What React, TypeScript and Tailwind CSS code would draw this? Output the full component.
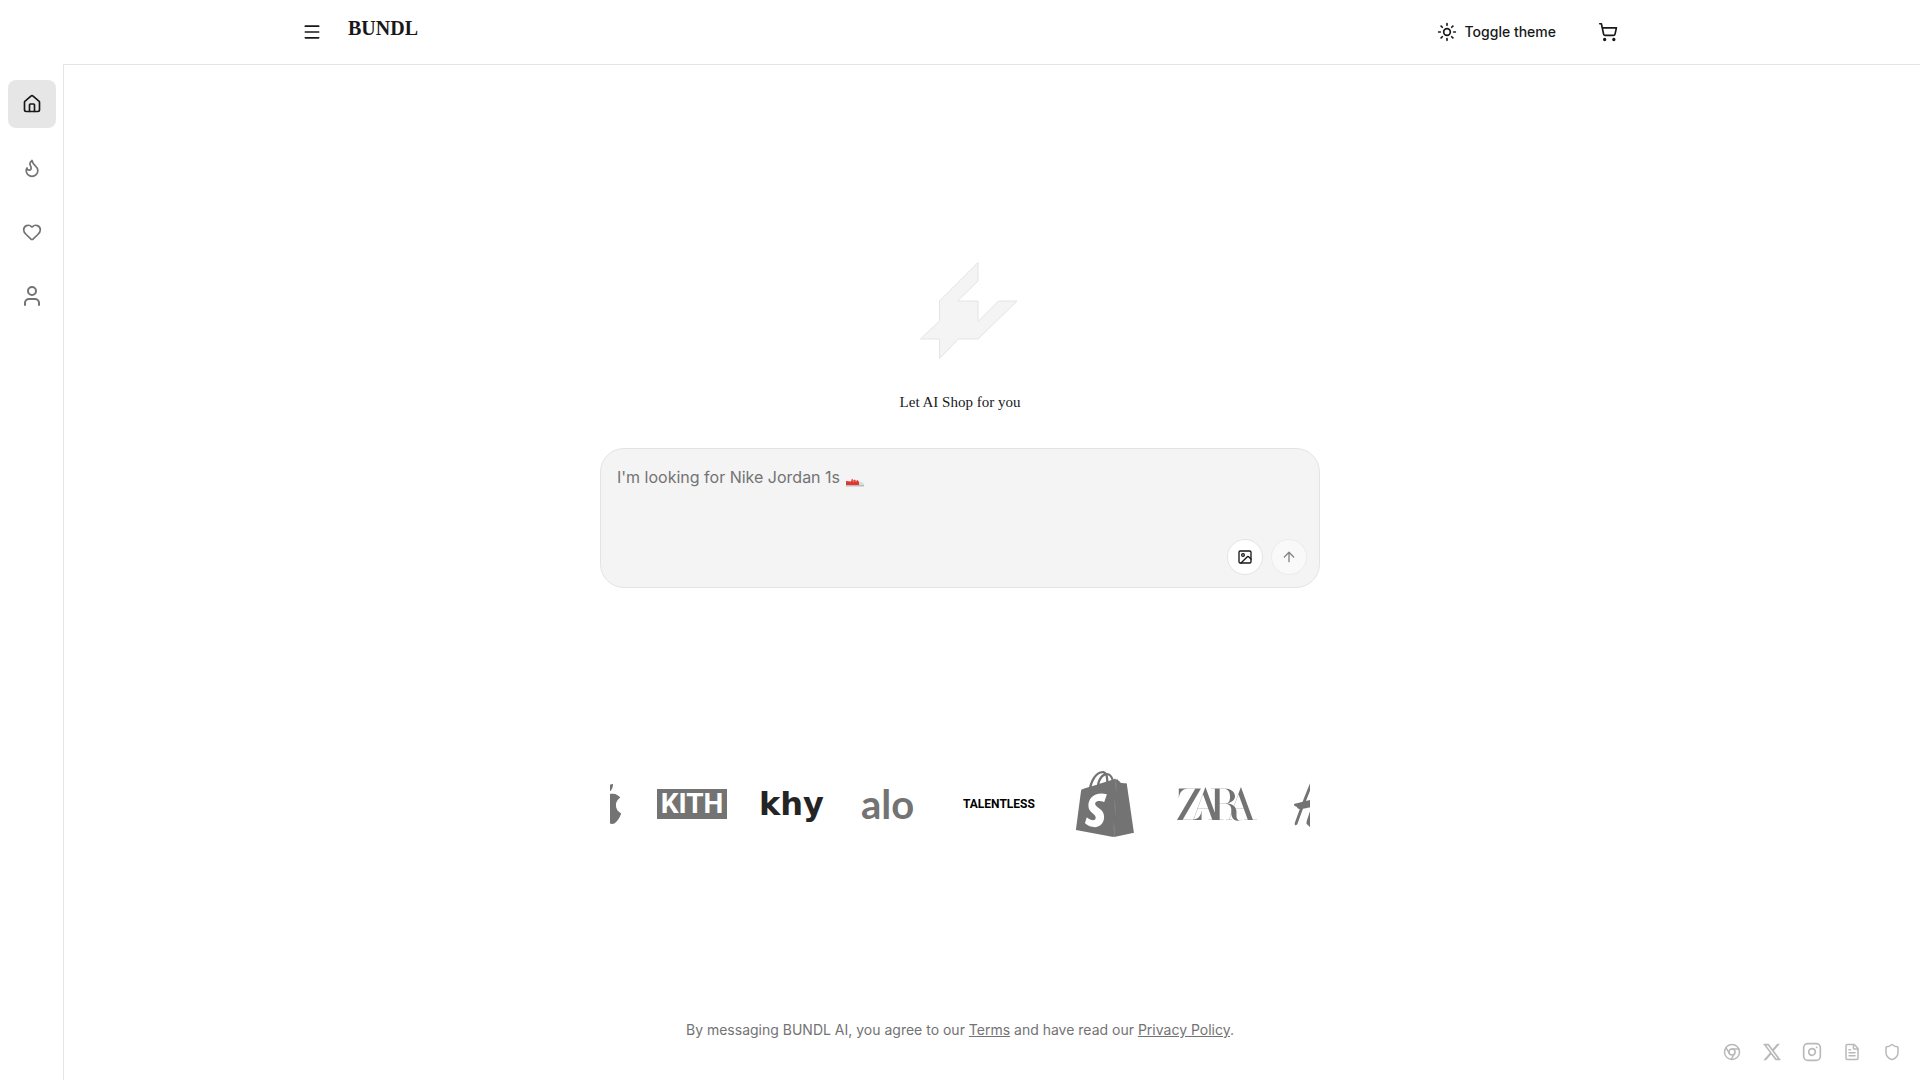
import React from 'react';
import {
  ArrowUp,
  Chrome,
  FileText,
  Flame,
  Heart,
  House,
  Image,
  Instagram,
  Menu,
  Shield,
  ShoppingCart,
  Sun,
  User,
} from 'lucide-react';
import { BsTwitterX } from 'react-icons/bs';
import { SiApple, SiHandm, SiShopify, SiZara } from 'react-icons/si';

const navItems = [
  { label: 'Home', icon: <House size={20} />, active: true },
  { label: 'Trending', icon: <Flame size={20} />, active: false },
  { label: 'Favorites', icon: <Heart size={20} />, active: false },
  { label: 'Profile', icon: <User size={24} />, active: false },
];

const socialLinks = [
  { label: 'Chrome extension', icon: <Chrome size={18} /> },
  { label: 'X', icon: <BsTwitterX size={18} /> },
  { label: 'Instagram', icon: <Instagram size={20} /> },
  { label: 'Terms', icon: <FileText size={18} /> },
  { label: 'Privacy', icon: <Shield size={18} /> },
];

const Header: React.FC = () => (
  <header className="h-16">
    <div className="mx-auto flex h-full max-w-[1400px] items-center justify-between px-8">
      <div className="flex items-center gap-4">
        <button aria-label="Open menu" className="flex size-10 items-center justify-center">
          <Menu size={20} />
        </button>
        <a href="#" className="pb-2 font-['Liberation_Serif',serif] text-xl font-bold">
          BUNDL
        </a>
      </div>
      <div className="flex items-center gap-4">
        <button className="flex h-10 items-center gap-2 px-4 text-sm font-medium">
          <Sun size={20} />
          Toggle theme
        </button>
        <button aria-label="Cart" className="flex size-10 items-center justify-center">
          <ShoppingCart size={20} />
        </button>
      </div>
    </div>
  </header>
);

const Sidebar: React.FC = () => (
  <aside className="w-16 shrink-0 border-r border-[#e4e4e4] px-2 pt-4">
    <nav className="flex flex-col gap-4">
      {navItems.map((item) => (
        <a
          key={item.label}
          href="#"
          aria-label={item.label}
          className={
            item.active
              ? 'flex h-12 w-12 items-center justify-center rounded-lg bg-[#e6e6e6] text-[#18181b]'
              : 'flex h-12 w-12 items-center justify-center rounded-lg text-[#737373]'
          }
        >
          {item.icon}
        </a>
      ))}
    </nav>
  </aside>
);

const Sneaker: React.FC<{ className: string }> = ({ className }) => (
  <svg width="18" height="9" viewBox="0 0 18 9" className={className} aria-hidden="true">
    <path d="M0 6.500H18V8Q18 8.500 17 8.500H0Z" fill="#b4bfc1" />
    <path d="M12 3.500L15.500 4Q18 4.800 18 7H12Z" fill="#d9dcdd" />
    <path d="M0 3L5 3.500L6 .5L7.500 2.500L9 1.500L10 3L11.500 2L13 4V7H0Z" fill="#e0382f" />
    <path d="M6.500 2.500L8 4M9 2.500L10.500 4" stroke="#f3b7b2" strokeWidth="0.700" />
  </svg>
);

const Prompt: React.FC = () => (
  <form className="relative mt-8 w-full max-w-[720px] rounded-3xl border border-[#e4e4e4] bg-[#f4f4f4]">
    <textarea
      aria-label="What are you looking for?"
      placeholder="I'm looking for Nike Jordan 1s"
      className="peer block h-[90px] w-full resize-none px-4 pt-4 text-base outline-none placeholder:text-[#737373]"
    />
    {/* Sits at the end of the placeholder and goes away with it */}
    <Sneaker className="pointer-events-none absolute top-[29px] left-[245px] hidden peer-placeholder-shown:block" />
    <div className="flex justify-end gap-2 px-3 pb-3">
      <button
        type="button"
        aria-label="Upload image"
        className="flex size-9 items-center justify-center rounded-full border border-[#e4e4e4] bg-white"
      >
        <Image size={16} />
      </button>
      <button
        type="submit"
        aria-label="Send"
        disabled
        className="flex size-9 items-center justify-center rounded-full border border-[#e4e4e4] bg-white opacity-50"
      >
        <ArrowUp size={16} />
      </button>
    </div>
  </form>
);

const Brands: React.FC = () => (
  <div className="mt-44 w-full max-w-[700px] overflow-hidden">
    <div className="-ml-[25px] flex h-20 items-center gap-8 text-[#737373]">
      <SiApple size={40} className="shrink-0" />
      <span className="flex h-[30px] w-[70px] shrink-0 items-center justify-center bg-[#737373] font-[Roboto,sans-serif] text-[28px] font-bold text-white">
        KITH
      </span>
      <span className="w-[70px] shrink-0 font-['DejaVu_Sans',sans-serif] text-[32px] font-bold text-[#242424]">
        khy
      </span>
      <span className="w-[70px] shrink-0 font-[Lato,sans-serif] text-[40px] font-bold">alo</span>
      <span className="w-[70px] shrink-0 font-[Roboto,sans-serif] text-xs font-bold text-black">
        TALENTLESS
      </span>
      <span className="flex w-20 shrink-0 justify-center">
        <svg width="66" height="66" viewBox="0 0 24 24">
          <SiShopify size={24} />
          <path d="M16.100 3.200L15.130 23.800" stroke="currentColor" strokeWidth="0.600" />
        </svg>
      </span>
      <SiZara size={80} className="shrink-0" />
      <span className="flex w-20 shrink-0 justify-center">
        <SiHandm size={70} />
      </span>
    </div>
  </div>
);

const App: React.FC = () => {
  return (
    <div className="flex min-h-screen flex-col bg-white font-[Inter,sans-serif] text-[#18181b]">
      <Header />
      <div className="flex flex-1">
        <Sidebar />
        <main className="flex flex-1 flex-col border-t border-[#e4e4e4]">
          <div className="flex flex-1 flex-col items-center pt-[195px] pr-16">
            <svg width="120" height="100" viewBox="0 0 120 100" fill="#f4f4f4" stroke="#e4e4e4">
              <path d="M98 2.500V21L77.500 41H98V61.500L118.500 41H137L98 79H78.500L59.500 98.500V79H40.500L59.500 61V41Z" transform="translate(-20 0)" />
            </svg>
            <h1 className="mt-7 font-['Liberation_Serif',serif] text-[15px] leading-7">
              Let AI Shop for you
            </h1>
            <Prompt />
            <Brands />
            <p className="mt-auto text-sm text-[#737373]">
              By messaging BUNDL AI, you agree to our{' '}
              <a href="#" className="underline">Terms</a> and have read our{' '}
              <a href="#" className="underline">Privacy Policy</a>.
            </p>
          </div>
          <footer className="flex justify-end gap-4 pr-4 pb-4 text-[#b9b9b9]">
            {socialLinks.map((link) => (
              <a
                key={link.label}
                href="#"
                aria-label={link.label}
                className="flex size-6 items-center justify-center"
              >
                {link.icon}
              </a>
            ))}
          </footer>
        </main>
      </div>
    </div>
  );
};

export default App;
